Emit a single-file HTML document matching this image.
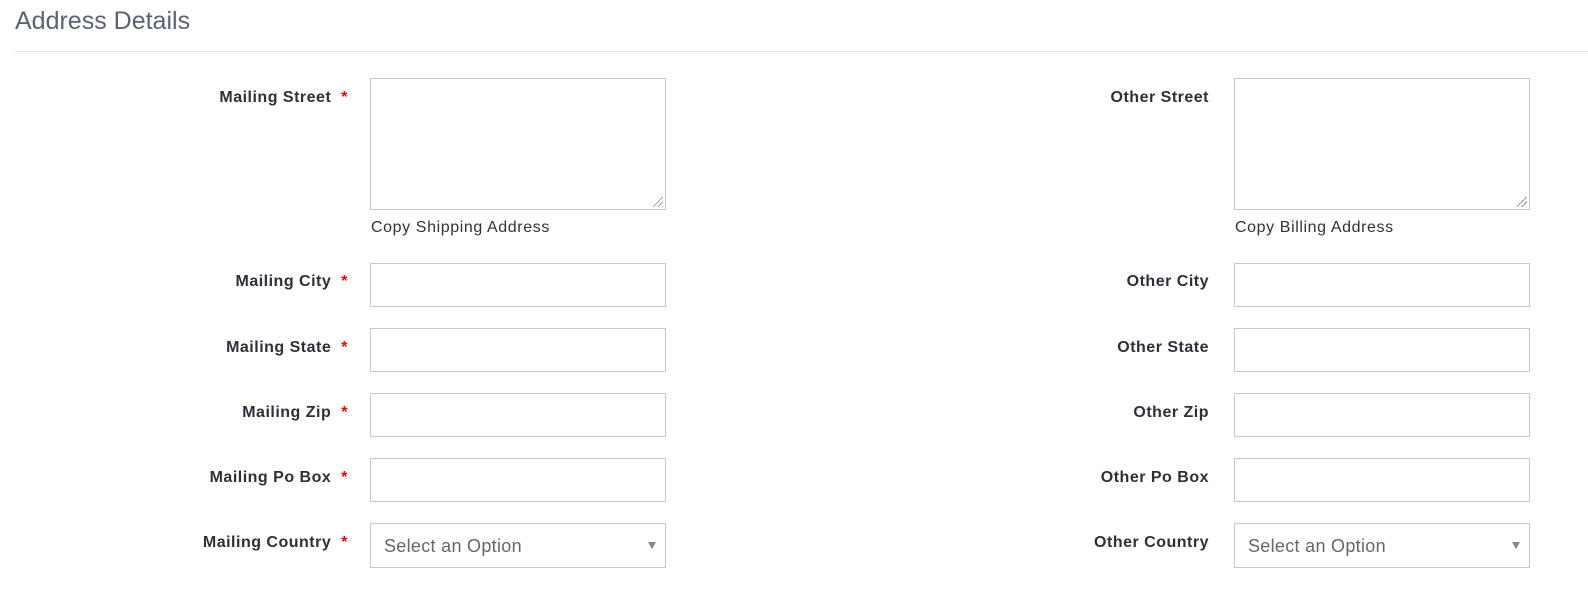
<!DOCTYPE html>
<html><head><style>
body{margin:0;width:1588px;height:614px;background:#fff;font-family:"Liberation Sans",sans-serif;position:relative;overflow:hidden}
.t{position:absolute;left:15px;top:7px;font-size:25px;color:#5b6372}
.hr{position:absolute;left:15px;right:0;top:51px;border-top:1px solid #e5e5e5}
.l{position:absolute;font-size:16px;letter-spacing:0.5px;font-weight:bold;color:#2c3038;text-align:right;white-space:nowrap}
.s{color:#e00;margin-left:10px}
.b{position:absolute;border:1px solid #c8c8c8;background:#fff;box-sizing:border-box;width:296px}
.c{position:absolute;font-size:16px;letter-spacing:0.6px;color:#333}
.sel{font-size:18px;letter-spacing:0.3px;color:#666;padding:12px 0 0 13px}
.ar{position:absolute;right:9px;top:18px;width:0;height:0;border-left:4px solid transparent;border-right:4px solid transparent;border-top:7px solid #888}
.rz{position:absolute;right:2px;bottom:2px;width:10px;height:10px;background:linear-gradient(135deg,transparent 45%,#888 45%,#888 52%,transparent 52%,transparent 70%,#888 70%,#888 77%,transparent 77%)}
</style></head><body>
<div class="t">Address Details</div>
<div class="hr"></div>

<div class="l" style="right:1240px;top:89px">Mailing Street<span class="s">*</span></div>
<div class="b" style="left:370px;top:78px;height:132px"><div class="rz"></div></div>
<div class="c" style="left:371px;top:219px">Copy Shipping Address</div>
<div class="l" style="right:1240px;top:273px">Mailing City<span class="s">*</span></div>
<div class="b" style="left:370px;top:263px;height:44px"></div>
<div class="l" style="right:1240px;top:339px">Mailing State<span class="s">*</span></div>
<div class="b" style="left:370px;top:328px;height:44px"></div>
<div class="l" style="right:1240px;top:404px">Mailing Zip<span class="s">*</span></div>
<div class="b" style="left:370px;top:393px;height:44px"></div>
<div class="l" style="right:1240px;top:469px">Mailing Po Box<span class="s">*</span></div>
<div class="b" style="left:370px;top:458px;height:44px"></div>
<div class="l" style="right:1240px;top:534px">Mailing Country<span class="s">*</span></div>
<div class="b sel" style="left:370px;top:523px;height:45px">Select an Option<div class="ar"></div></div>

<div class="l" style="right:379px;top:89px">Other Street</div>
<div class="b" style="left:1234px;top:78px;height:132px"><div class="rz"></div></div>
<div class="c" style="left:1235px;top:219px">Copy Billing Address</div>
<div class="l" style="right:379px;top:273px">Other City</div>
<div class="b" style="left:1234px;top:263px;height:44px"></div>
<div class="l" style="right:379px;top:339px">Other State</div>
<div class="b" style="left:1234px;top:328px;height:44px"></div>
<div class="l" style="right:379px;top:404px">Other Zip</div>
<div class="b" style="left:1234px;top:393px;height:44px"></div>
<div class="l" style="right:379px;top:469px">Other Po Box</div>
<div class="b" style="left:1234px;top:458px;height:44px"></div>
<div class="l" style="right:379px;top:534px">Other Country</div>
<div class="b sel" style="left:1234px;top:523px;height:45px">Select an Option<div class="ar"></div></div>
</body></html>
